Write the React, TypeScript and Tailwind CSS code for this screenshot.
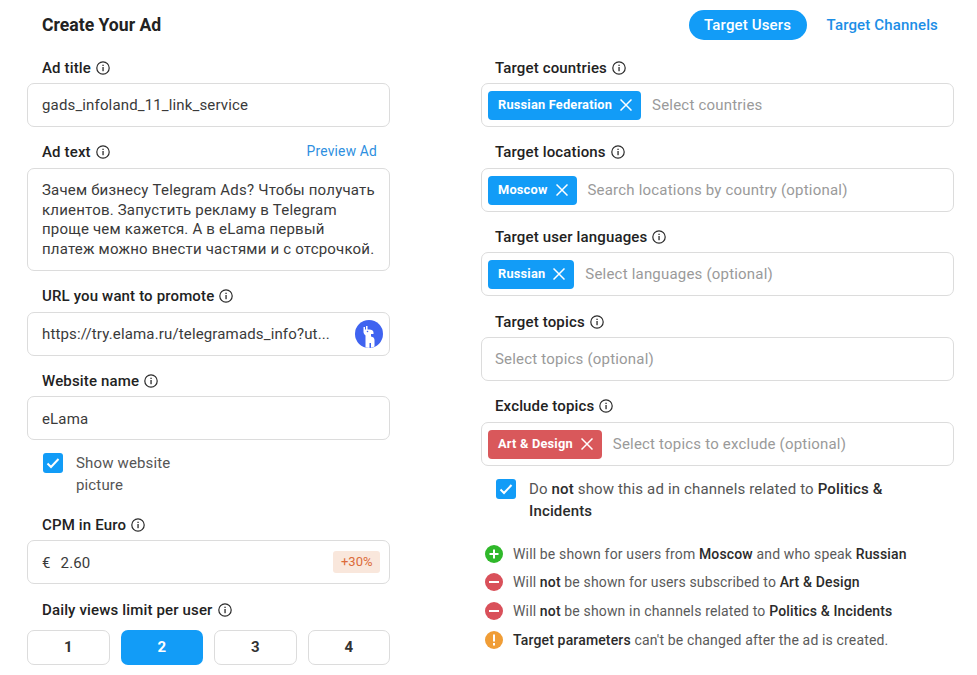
import React from "react";

function InfoIcon() {
  return (
    <svg width="14" height="14" viewBox="0 0 14 14" fill="none" className="shrink-0">
      <circle cx="7" cy="7" r="6.2" stroke="#2b2b2b" strokeWidth="1.2" />
      <rect x="6.4" y="6" width="1.3" height="4.2" fill="#2b2b2b" />
      <rect x="6.4" y="3.7" width="1.3" height="1.3" fill="#2b2b2b" />
    </svg>
  );
}

function Label({ text, className = "" }: { text: string; className?: string }) {
  return (
    <div className={`flex items-center gap-[5px] h-5 pl-[15px] text-[15px] font-medium text-[#222] tracking-[0.15px] ${className}`}>
      <span>{text}</span>
      <InfoIcon />
    </div>
  );
}

function X() {
  return (
    <svg width="12" height="12" viewBox="0 0 12 12" fill="none" className="shrink-0">
      <path d="M0.5 0.5L11.5 11.5M11.5 0.5L0.5 11.5" stroke="#fff" strokeWidth="1.5" />
    </svg>
  );
}

function Tag({ text, red }: { text: string; red?: boolean }) {
  return (
    <span className={`flex items-center gap-[8px] h-[29px] pl-[10px] pr-[9px] rounded-[4px] text-white text-[12.8px] font-bold shrink-0 ${red ? "bg-[#d9585b]" : "bg-[#129cf7]"}`}>
      {text}
      <X />
    </span>
  );
}

function TagField({ tag, placeholder, red }: { tag: string; placeholder: string; red?: boolean }) {
  return (
    <div className="flex items-center gap-[11px] h-[44px] pl-[6px] border border-[#dcdcdc] rounded-[7px] text-[15px] text-[#9a9a9a] tracking-[0.2px]">
      <Tag text={tag} red={red} />
      <span>{placeholder}</span>
    </div>
  );
}

function Check({ className = "" }: { className?: string }) {
  return (
    <span className={`flex items-center justify-center w-5 h-5 rounded-[3px] bg-[#129cf7] shrink-0 ${className}`}>
      <svg width="14" height="12" viewBox="0 0 14 12" fill="none">
        <path d="M1.5 6.5L5 10L12.5 2" stroke="#fff" strokeWidth="2" />
      </svg>
    </span>
  );
}

function Status({ color, kind }: { color: string; kind: "plus" | "minus" | "warn" }) {
  return (
    <svg width="18" height="18" viewBox="0 0 18 18" className="shrink-0">
      <circle cx="9" cy="9" r="9" fill={color} />
      {kind === "plus" && <path d="M4.5 9H13.5M9 4.5V13.5" stroke="#fff" strokeWidth="2" />}
      {kind === "minus" && <path d="M4 9H14" stroke="#fff" strokeWidth="2" />}
      {kind === "warn" && <path d="M9 3.5V10.5M9 12V14.5" stroke="#fff" strokeWidth="2" />}
    </svg>
  );
}

const inputCls = "flex items-center h-[44px] px-[14px] border border-[#dcdcdc] rounded-[7px] text-[15px] text-[#3a3a3a] tracking-[0.15px]";

function Row({ color, kind, children, className = "" }: { color: string; kind: "plus" | "minus" | "warn"; children: React.ReactNode; className?: string }) {
  return (
    <div className={`flex items-center gap-[10px] pl-[4px] h-5 text-[14px] text-[#5a5a5a] tracking-[0.15px] ${className}`}>
      <Status color={color} kind={kind} />
      <span>{children}</span>
    </div>
  );
}

function B({ children }: { children: React.ReactNode }) {
  return <b className="font-medium text-[#2b2b2b]">{children}</b>;
}

export default function App() {
  return (
    <div className="flex w-[977px] h-[675px] overflow-hidden bg-white pl-[27px] font-['Roboto',sans-serif]">
      <div className="w-[363px] shrink-0">
        <div className="flex items-center h-[50px] pl-[15px] text-[17.6px] font-bold text-[#222]">Create Your Ad</div>
        <div className="mt-[8px]"><Label text="Ad title" /></div>
        <div className={`${inputCls} mt-[5px]`}>gads_infoland_11_link_service</div>

        <div className="flex items-center justify-between mt-[15px] pr-[13px]">
          <Label text="Ad text" />
          <span className="text-[13.8px] text-[#2e8fe0] tracking-[0.2px] -mt-[2px]">Preview Ad</span>
        </div>
        <div className="mt-[6px] h-[103px] px-[14px] pt-[12px] border border-[#dcdcdc] rounded-[7px] text-[15px] leading-[19.5px] text-[#3a3a3a] tracking-[0.2px] whitespace-nowrap">
          <div>Зачем бизнесу Telegram Ads? Чтобы получать</div>
          <div>клиентов. Запустить рекламу в Telegram</div>
          <div>проще чем кажется. А в eLama первый</div>
          <div>платеж можно внести частями и с отсрочкой.</div>
        </div>

        <Label text="URL you want to promote" className="mt-[15px]" />
        <div className={`${inputCls} mt-[6px] justify-between !pr-[6px]`}>
          <span>https://try.elama.ru/telegramads_info?ut...</span>
          <svg width="28" height="28" viewBox="0 0 28 28" className="shrink-0">
            <circle cx="14" cy="14" r="14" fill="#3f63f0" />
            <path d="M10.5 27.6V15.5C9.5 14.5 8.5 13.5 8.5 12V7H10V9.5H11V6H12.5V9.5H14.5C16.5 9.5 18.5 10.5 18.5 12.5V14H16V16.5C18 16.8 19.5 18 19.5 20V26.5C18 27.3 17 27.6 16 27.8V23H14.5V28Z" fill="#fff" />
            <circle cx="12.5" cy="11.5" r="0.8" fill="#3f63f0" />
          </svg>
        </div>

        <Label text="Website name" className="mt-[15px]" />
        <div className={`${inputCls} mt-[5px] pt-[2px]`}>eLama</div>

        <div className="flex gap-[13px] mt-[13px] ml-[16px] text-[15px] leading-[22px] text-[#555] tracking-[0.15px]">
          <Check />
          <div className="-mt-[1px]">Show website<br />picture</div>
        </div>

        <Label text="CPM in Euro" className="mt-[19px]" />
        <div className={`${inputCls} mt-[5px] pt-[2px] justify-between !pr-[9px]`}>
          <span className="flex gap-[10px]"><span>€</span><span>2.60</span></span>
          <span className="flex items-center h-[22px] -mt-[2px] px-[7.5px] rounded-[3px] bg-[#f9e7dc] text-[13px] tracking-normal text-[#dc6b3a]">+30%</span>
        </div>

        <Label text="Daily views limit per user" className="mt-[16px]" />
        <div className="grid grid-cols-4 gap-[11px] mt-[10px]">
          {["1", "2", "3", "4"].map((n) => (
            <div
              key={n}
              className={`flex items-center justify-center h-[35px] rounded-[7px] text-[15px] font-bold ${n === "2" ? "bg-[#129cf7] text-white" : "border border-[#dcdcdc] text-[#333]"}`}
            >
              {n}
            </div>
          ))}
        </div>
      </div>

      <div className="w-[473px] shrink-0 ml-[91px]">
        <div className="flex items-center justify-end h-[50px] pr-[16px]">
          <span className="flex items-center justify-center w-[118px] h-[30px] rounded-full bg-[#129cf7] text-white text-[15px] font-medium tracking-[0.15px]">Target Users</span>
          <span className="ml-[20px] text-[15px] font-medium text-[#1c8ee6] tracking-[0.15px]">Target Channels</span>
        </div>
        <div className="mt-[8px]"><Label text="Target countries" className="!pl-[14px]" /></div>
        <div className="mt-[5px]"><TagField tag="Russian Federation" placeholder="Select countries" /></div>
        <Label text="Target locations" className="mt-[15px] !pl-[14px]" />
        <div className="mt-[6px]"><TagField tag="Moscow" placeholder="Search locations by country (optional)" /></div>
        <Label text="Target user languages" className="mt-[15px] !pl-[14px]" />
        <div className="mt-[5px]"><TagField tag="Russian" placeholder="Select languages (optional)" /></div>
        <Label text="Target topics" className="mt-[16px] !pl-[14px]" />
        <div className="mt-[5px] flex items-center h-[44px] px-[13px] border border-[#dcdcdc] rounded-[7px] text-[15px] text-[#9a9a9a] tracking-[0.2px]">Select topics (optional)</div>
        <Label text="Exclude topics" className="mt-[15px] !pl-[14px]" />
        <div className="mt-[6px]"><TagField tag="Art & Design" placeholder="Select topics to exclude (optional)" red /></div>

        <div className="flex gap-[13px] mt-[13px] ml-[15px] mr-[40px] text-[15px] leading-[22px] text-[#555] tracking-[0.15px]">
          <Check />
          <div className="-mt-[1px]">Do <B>not</B> show this ad in channels related to <B>Politics &amp; Incidents</B></div>
        </div>

        <Row color="#2fb82a" kind="plus" className="mt-[22px]">Will be shown for users from <B>Moscow</B> and who speak <B>Russian</B></Row>
        <Row color="#d9505a" kind="minus" className="mt-[8px]">Will <B>not</B> be shown for users subscribed to <B>Art &amp; Design</B></Row>
        <Row color="#d9505a" kind="minus" className="mt-[9px]">Will <B>not</B> be shown in channels related to <B>Politics &amp; Incidents</B></Row>
        <Row color="#f09d36" kind="warn" className="mt-[9px]"><B>Target parameters</B> can't be changed after the ad is created.</Row>
      </div>
    </div>
  );
}
